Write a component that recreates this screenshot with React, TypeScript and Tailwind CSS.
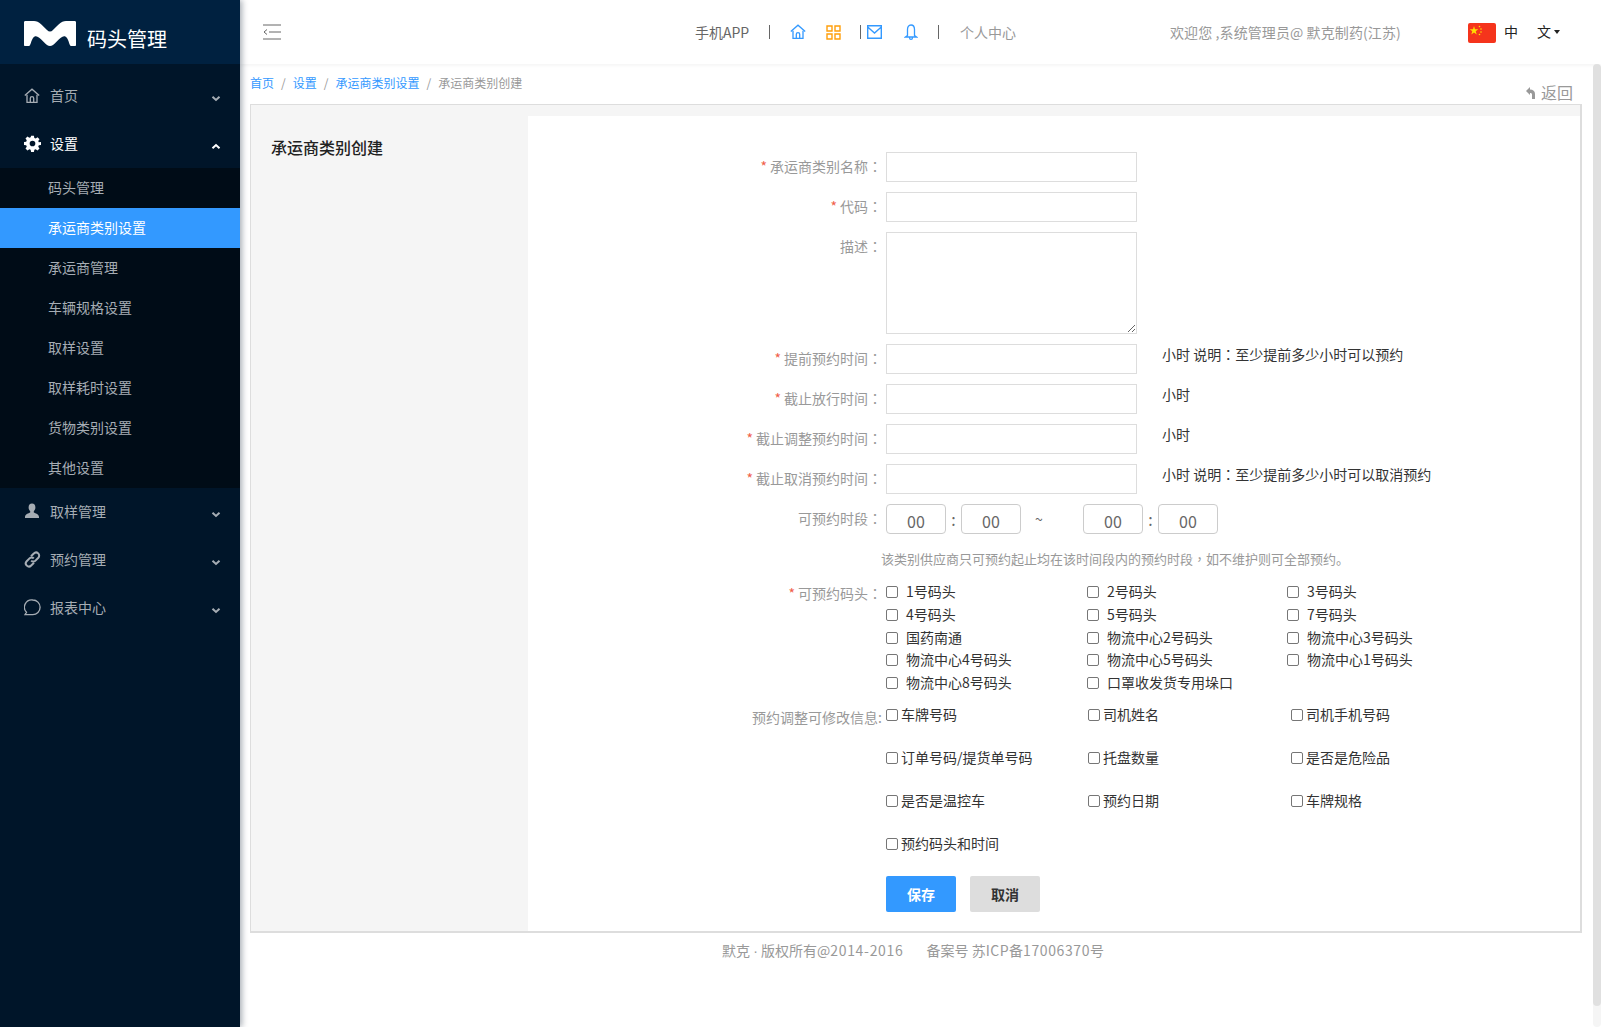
import React from "react";

const font = "[font-family:'Microsoft_YaHei','Noto_Sans_CJK_SC',sans-serif]";

function Chevron({ up }: { up?: boolean }) {
  return (
    <svg width="10" height="7" viewBox="0 0 10 7" className="ml-auto mr-[19px] mt-[5px]">
      <path d={up ? "M1.5 5.2 5 2l3.5 3.2" : "M1.5 1.8 5 5l3.5-3.2"} fill="none" stroke="currentColor" strokeWidth="2" />
    </svg>
  );
}

function HomeIcon({ className }: { className?: string }) {
  return (
    <svg width="16" height="16" viewBox="0 0 16 16" className={className} fill="none" stroke="currentColor" strokeWidth="1.300">
      <path d="M.8 7.500 8 1.200l7.200 6.300" />
      <path d="M3 6.800v7.500h10V6.800" />
      <path d="M6.300 14V10.300a1.700 1.700 0 0 1 3.400 0V14" />
    </svg>
  );
}

function TopItem({ icon, label, up, active }: { icon: React.ReactNode; label: string; up?: boolean; active?: boolean }) {
  return (
    <div className={`h-12 flex items-center pl-6 text-sm ${active ? "text-white" : "text-[#a6adb4]"}`}>
      <span className="w-[26px] flex items-center shrink-0">{icon}</span>
      <span className="mb-[3px]">{label}</span>
      <Chevron up={up} />
    </div>
  );
}

const sub = ["码头管理", "承运商类别设置", "承运商管理", "车辆规格设置", "取样设置", "取样耗时设置", "货物类别设置", "其他设置"];

function Sidebar() {
  return (
    <aside className="w-60 shrink-0 bg-[#001529] shadow-[2px_0_6px_rgba(0,21,41,0.35)] z-10">
      <div className="h-16 bg-[#002140] flex items-center pl-6">
        <svg width="52" height="25" viewBox="0 0 52 25" className="mt-[2px]" fill="#fff">
          <path d="M0 1.500C0 .5.5 0 1.500 0H10C15 0 19 5 23 9C25 11 27 11 29 9C33 5 37 0 42 0H50.500C51.500 0 52 .5 52 1.500V24C52 24.600 51.500 25 51 25H47C45.500 25 45 20 43 17C41.500 15 40 15 38 16C34 18 30 25 26 25C22 25 18 18 14 16C12 15 10.500 15 9 17C7 20 6.500 25 5 25H1C.5 25 0 24.600 0 24Z" />
        </svg>
        <span className="ml-[11px] text-xl text-white mt-[13px]">码头管理</span>
      </div>
      <nav className="pt-2">
        <TopItem label="首页" icon={<HomeIcon />} />
        <TopItem
          active
          label="设置"
          up
          icon={
            <svg width="17" height="17" viewBox="0 0 24 24" fill="#fff" className="mb-[2px]">
              <path fillRule="evenodd" d="M10 1h4l.6 3.100 1.900.8 2.600-1.800 2.800 2.800-1.800 2.600.8 1.900L24 10v4l-3.100.6-.8 1.900 1.800 2.600-2.800 2.800-2.600-1.800-1.900.8L14 24h-4l-.6-3.100-1.900-.8-2.600 1.800-2.800-2.800 1.800-2.600-.8-1.900L0 14v-4l3.100-.6.8-1.900L2.100 4.900l2.800-2.800 2.600 1.800 1.900-.8ZM12 8a4 4 0 1 0 0 8 4 4 0 0 0 0-8Z" />
            </svg>
          }
        />
        <div className="bg-[#000c17]">
          {sub.map((s, i) => (
            <div key={s} className={`h-10 flex items-center pl-12 pb-[2px] text-sm ${i === 1 ? "bg-[#3399ff] text-white" : "text-[#a6adb4]"}`}>
              {s}
            </div>
          ))}
        </div>
        <TopItem
          label="取样管理"
          icon={
            <svg width="16" height="16" viewBox="0 0 16 16" fill="currentColor" className="mb-[2px]">
              <path d="M8 .5c2.200 0 3.400 1.700 3.400 3.900 0 1.600-.7 3-1.600 3.800v1.300c1.600.8 5.200 1.800 5.200 4.500v1H1v-1c0-2.700 3.600-3.700 5.200-4.500V8.200c-.9-.8-1.600-2.200-1.600-3.800C4.600 2.200 5.800.5 8 .5Z" />
            </svg>
          }
        />
        <TopItem
          label="预约管理"
          icon={
            <svg width="17" height="17" viewBox="0 0 17 17" fill="none" stroke="currentColor" strokeWidth="2" className="mb-[2px]">
              <path d="M7 5.200 9.800 2.500a3 3 0 0 1 4.500 4.300l-2.800 2.800a3 3 0 0 1-4.300 0" />
              <path d="M10 11.800 7.200 14.500a3 3 0 0 1-4.500-4.300l2.800-2.800a3 3 0 0 1 4.300 0" />
            </svg>
          }
        />
        <TopItem
          label="报表中心"
          icon={
            <svg width="17" height="17" viewBox="0 0 17 17" fill="none" stroke="currentColor" strokeWidth="1.300" className="mb-[2px]">
              <path d="M8.800 1a7.300 7.300 0 0 1 0 14.600H1l1.500-2.300A7.300 7.300 0 0 1 8.800 1Z" />
            </svg>
          }
        />
      </nav>
    </aside>
  );
}

function Header() {
  return (
    <header className="h-16 bg-white shadow-[0_1px_4px_rgba(0,0,0,0.06)] flex items-center text-sm relative">
      <svg width="18" height="16" viewBox="0 0 18 16" className="ml-[23px] text-[#666]" fill="none" stroke="currentColor">
        <path d="M0 1h18M6 8h12M0 15h18" />
        <path d="M4 5.500 1 8l3 2.500" />
      </svg>
      <span className="ml-[414px] text-[#666] w-[55px] whitespace-nowrap">手机APP</span>
      <span className="ml-[19px] h-[14px] w-[1px] bg-[#666]" />
      <HomeIcon className="ml-[20px] text-[#3399ff]" />
      <svg width="15" height="15" viewBox="0 0 15 15" className="ml-[20px] text-[#ff9f0a]" fill="none" stroke="currentColor" strokeWidth="1.400">
        <path d="M1 1h5v5H1zM9 1h5v5H9zM1 9h5v5H1zM9 9h5v5H9z" />
      </svg>
      <span className="ml-[19px] h-[14px] w-[1px] bg-[#666]" />
      <svg width="15" height="14" viewBox="0 0 15 14" className="ml-[6px] text-[#3399ff]" fill="none" stroke="currentColor" strokeWidth="1.400">
        <path d="M.7.7h13.600v12.600H.7zM.7 2 7.500 8 14.300 2" />
      </svg>
      <svg width="14" height="17" viewBox="0 0 14 17" className="ml-[22px] text-[#3399ff]" fill="none" stroke="currentColor" strokeWidth="1.300">
        <path d="M7 1c2.500 0 3.500 2 3.500 4.500v6l2 1.500H1.500l2-1.500v-6C3.500 3 4.500 1 7 1ZM5.500 13.500c0 2.500 3 2.500 3 0" />
      </svg>
      <span className="ml-[20px] h-[14px] w-[1px] bg-[#666]" />
      <span className="ml-[21px] text-[#999]">个人中心</span>
      <span className="ml-[154px] w-[232px] text-[#999] whitespace-nowrap tracking-[0.1px]">欢迎您 ,系统管理员@ 默克制药(江苏)</span>
      <svg width="28" height="20" viewBox="0 0 28 20" className="ml-[66px] mt-[2px] rounded-[2px]">
        <rect width="28" height="20" fill="#f5341c" />
        <path d="M6 3 7 6.200h3.300L7.700 8.200l1 3.200L6 9.400 3.300 11.400l1-3.200-2.600-2h3.300Z" fill="#ffde00" />
        <circle cx="11.500" cy="3.500" r=".8" fill="#ffde00" />
        <circle cx="13" cy="6" r=".8" fill="#ffde00" />
        <circle cx="13" cy="9" r=".8" fill="#ffde00" />
        <circle cx="11.500" cy="11.500" r=".8" fill="#ffde00" />
      </svg>
      <span className="ml-2 text-[#222] mb-[2px]">中</span>
      <span className="ml-[19px] text-[#222] mb-[2px]">文</span>
      <span className="ml-[3px] w-0 h-0 border-x-[3px] border-x-transparent border-t-[4px] border-t-[#222]" />
    </header>
  );
}

function Punct({ c }: { c: string }) {
  return <span className="[font-family:'Noto_Sans_CJK_TC',sans-serif]">{c}</span>;
}

function Label({ children, required, className = "" }: { children: React.ReactNode; required?: boolean; className?: string }) {
  return (
    <div className={`w-[354px] shrink-0 text-right text-sm text-[#999] whitespace-nowrap ${className}`}>
      {required && <span className="text-[#f0604a] mr-[3px]">*</span>}
      {children}
    </div>
  );
}

const field = "w-[251px] h-[30px] border border-[#ddd] bg-white outline-none block";

function InputRow({ label, required, note }: { label: string; required?: boolean; note?: React.ReactNode }) {
  return (
    <div className="flex h-[30px] mb-[10px]">
      <Label required={required} className="leading-[28px]">{label}<Punct c="：" /></Label>
      <div className="ml-1"><input className={field} /></div>
      {note && <span className="ml-[25px] text-sm text-[#333] leading-[20px]">{note}</span>}
    </div>
  );
}

function TimeInput() {
  return <input defaultValue="00" className="w-[60px] h-[30px] border border-[#ccc] rounded-[4px] text-center text-base text-[#666] pt-1 outline-none" />;
}

function Check({ label }: { label: string }) {
  return (
    <label className="flex items-center text-sm text-[#333] whitespace-nowrap">
      <span className="w-3 h-3 border border-[#767676] rounded-[2px] shrink-0 bg-white" />
      <span className="ml-2 mb-[2px]">{label}</span>
    </label>
  );
}

function Check2({ label }: { label: string }) {
  return (
    <label className="flex items-start text-sm text-[#333] whitespace-nowrap">
      <span className="w-3 h-3 border border-[#767676] rounded-[2px] shrink-0 bg-white mt-[5px]" />
      <span className="ml-[3px]">{label}</span>
    </label>
  );
}

const docks = ["1号码头", "2号码头", "3号码头", "4号码头", "5号码头", "7号码头", "国药南通", "物流中心2号码头", "物流中心3号码头", "物流中心4号码头", "物流中心5号码头", "物流中心1号码头", "物流中心8号码头", "口罩收发货专用垛口"];
const edits = ["车牌号码", "司机姓名", "司机手机号码", "订单号码/提货单号码", "托盘数量", "是否是危险品", "是否是温控车", "预约日期", "车牌规格", "预约码头和时间"];

function Form() {
  return (
    <div className="flex-1 bg-white mt-[11px] pt-9 mr-0">
      <InputRow required label="承运商类别名称" />
      <InputRow required label="代码" />
      <div className="flex h-[102px] mb-[10px]">
        <Label className="leading-[28px]">描述<Punct c="：" /></Label>
        <div className="ml-1"><textarea className="w-[251px] h-[102px] border border-[#ddd] outline-none block resize-y" /></div>
      </div>
      <InputRow required label="提前预约时间" note={<>小时 说明<Punct c="：" />至少提前多少小时可以预约</>} />
      <InputRow required label="截止放行时间" note="小时" />
      <InputRow required label="截止调整预约时间" note="小时" />
      <InputRow required label="截止取消预约时间" note={<>小时 说明<Punct c="：" />至少提前多少小时可以取消预约</>} />
      <div className="flex h-[30px]">
        <Label className="leading-[29px]">可预约时段<Punct c="：" /></Label>
        <div className="ml-1 flex items-center text-base text-[#666]">
          <TimeInput />
          <span className="w-[15px] text-center">:</span>
          <TimeInput />
          <span className="ml-[13px] w-[10px] text-center text-sm">~</span>
          <span className="w-[39px]" />
          <TimeInput />
          <span className="w-[15px] text-center">:</span>
          <TimeInput />
        </div>
      </div>
      <div className="pl-[353px] mt-[15px] h-5 leading-5 text-[13px] text-[#999] whitespace-nowrap">
        该类别供应商只可预约起止均在该时间段内的预约时段<Punct c="，" />如不维护则可全部预约。
      </div>
      <div className="flex mt-[12px]">
        <Label required className="leading-[24px]">可预约码头<Punct c="：" /></Label>
        <div className="ml-1 grid grid-cols-[201px_200px_200px] auto-rows-[22.7px] items-center">
          {docks.map((d) => <Check key={d} label={d} />)}
        </div>
      </div>
      <div className="flex mt-[10px]">
        <Label className="leading-[26px]">预约调整可修改信息:</Label>
        <div className="ml-1 grid grid-cols-[202px_203px_200px] auto-rows-[43px]">
          {edits.map((d) => <Check2 key={d} label={d} />)}
        </div>
      </div>
      <div className="ml-[358px] mt-0 flex gap-[14px] text-sm font-bold">
        <button className="w-[70px] h-9 rounded-[2px] bg-[#3399ff] text-white">保存</button>
        <button className="w-[70px] h-9 rounded-[2px] bg-[#ddd] text-[#333]">取消</button>
      </div>
    </div>
  );
}

export default function App() {
  return (
    <div className={`flex h-[1027px] w-full overflow-hidden bg-white ${font}`}>
      <Sidebar />
      <main className="flex-1 min-w-0 relative">
        <Header />
        <div className="h-10 pl-[10px] pr-[28px] flex items-start pt-[11px] text-xs leading-4">
          <span className="text-[#3399ff]">首页</span>
          <span className="text-[#999] mx-[7px]">/</span>
          <span className="text-[#3399ff]">设置</span>
          <span className="text-[#999] mx-[7px]">/</span>
          <span className="text-[#3399ff]">承运商类别设置</span>
          <span className="text-[#999] mx-[7px]">/</span>
          <span className="text-[#999]">承运商类别创建</span>
          <span className="ml-auto mt-[5px] text-base text-[#999] flex items-center">
            <svg width="10" height="12" viewBox="0 0 10 12" className="mr-[5px] mt-[2px]" fill="#999">
              <path d="M0 4 4 0v2.500c3 0 5 1.500 5 4.500v5H6V7.500C6 6.500 5.500 6 4 6v2Z" />
            </svg>
            返回
          </span>
        </div>
        <div className="ml-[10px] mr-[19px] h-[829px] border border-r-2 border-b-2 border-[#ddd] bg-[#f5f5f5] flex">
          <div className="w-[277px] shrink-0 pl-[20px] pt-[30px] text-base font-medium text-[#222]">承运商类别创建</div>
          <Form />
        </div>
        <div className="pl-[482px] mt-[7px] text-sm text-[#999] whitespace-nowrap">
          默克 <span className="[font-family:'Liberation_Sans',sans-serif]">·</span> 版权所有@<span className="tracking-[0.7px]">2014-2016</span>
          <span className="ml-[23px]">备案号 苏<span className="tracking-[0.5px]">ICP</span>备<span className="tracking-[0.6px]">17006370</span>号</span>
        </div>
        <div className="absolute right-0 top-16 bottom-0 w-2 bg-[#f5f5f5] rounded-[4px]">
          <div className="h-[942px] rounded-[4px] bg-[#e0e0e0]" />
        </div>
      </main>
    </div>
  );
}
